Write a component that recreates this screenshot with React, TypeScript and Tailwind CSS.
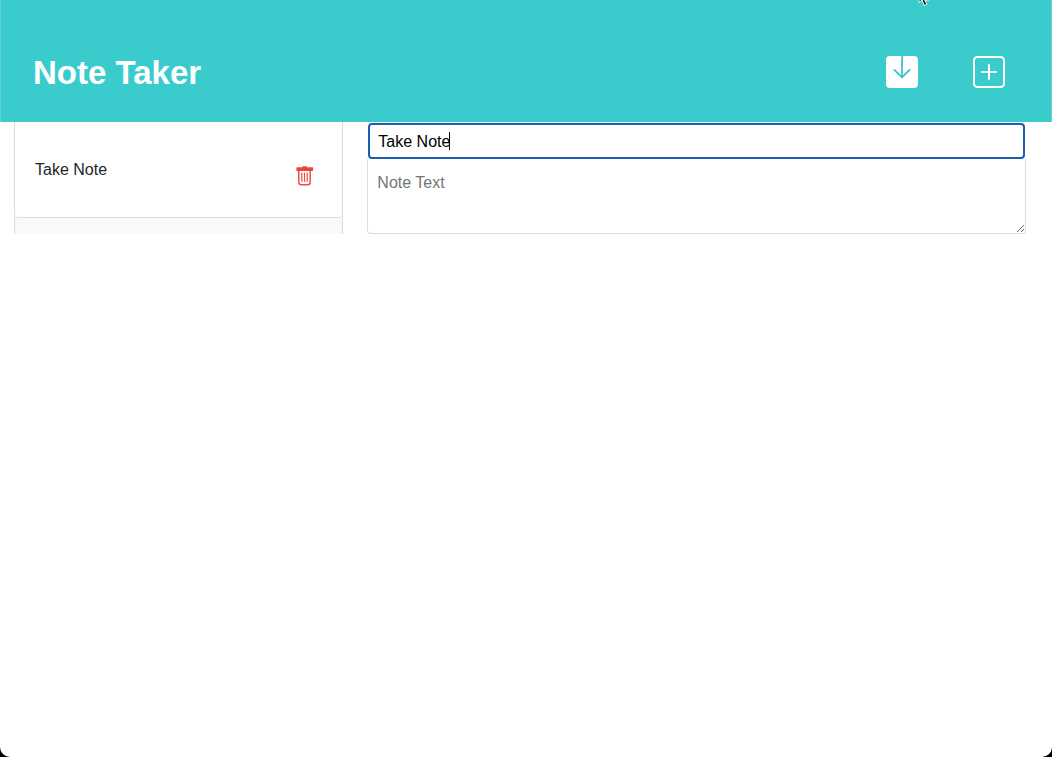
import { useState } from "react";

function SaveIcon() {
  return (
    <svg viewBox="0 0 32 32" className="block size-8" aria-hidden="true">
      <rect width="32" height="32" rx="4" fill="#fff" />
      <path d="M16.4 0L16 5v16M8.5 14l7.5 7.3 7.5-7.3" fill="none" stroke="#3cc6c9" strokeWidth="1.8" strokeLinecap="round" strokeLinejoin="round" />
    </svg>
  );
}

function AddIcon() {
  return (
    <svg viewBox="0 0 32 32" className="block size-8" fill="none" stroke="#fff" strokeWidth="2" aria-hidden="true">
      <rect x="1" y="1" width="30" height="30" rx="3.5" />
      <path d="M16 9v14M9 16h14" strokeLinecap="round" />
    </svg>
  );
}

function TrashIcon() {
  return (
    <svg viewBox="0 0 18 20" className="block h-5 w-[18px]" fill="none" stroke="#ea5048" aria-hidden="true">
      <path d="M.9 1.2h5.3Q6.3.2 7.3.2h2.9q1 0 1.1 1h5.3q.5 0 .5.6v2.4q0 .8-.7.8H1.1q-.7 0-.7-.8V1.8q0-.6.5-.6z" fill="#f04438" stroke="none" />
      <path d="M2.8 4v12.2q0 2.5 2.6 2.5h6.2q2.6 0 2.6-2.5V4" strokeWidth="1.5" />
      <path d="M5.8 7v8.5M8.5 7v8.5M11.2 7v8.5" strokeWidth="1.2" strokeLinecap="round" />
    </svg>
  );
}

function Pointer() {
  return (
    <svg viewBox="0 0 12 7" className="pointer-events-none absolute top-0 right-[122px] h-[7px] w-3" aria-hidden="true">
      <path d="M1 -9v11.5l3.1-2.5L6.2 5.5 8.8 4.3 6.7 0H11z" fill="#111" stroke="#fff" strokeWidth="1" />
    </svg>
  );
}

export default function App() {
  const [title, setTitle] = useState("Take Note");
  const [text, setText] = useState("");

  return (
    <div className="min-h-screen bg-black font-['Liberation_Sans',Arial,sans-serif] text-base text-[#212529]">
      <div className="relative min-h-screen overflow-hidden rounded-b-[10px] bg-white">
        <Pointer />
        <header className="flex h-[122px] items-center justify-between border-x border-[#61d6d7] bg-[#3acccd] pt-[22px] pr-[46px] pl-8">
          <h1 className="pt-0.5 text-[33px] leading-10 font-bold text-white">Note Taker</h1>
          <div className="flex gap-[55px]">
            <button type="button" aria-label="Save note">
              <SaveIcon />
            </button>
            <button type="button" aria-label="New note">
              <AddIcon />
            </button>
          </div>
        </header>
        <main className="grid grid-cols-[1fr_2fr] gap-x-6 pr-[26px] pl-3.5">
          <aside className="h-28 border-x border-[#d9dadc] bg-[#f8f9fa]">
            <ul>
              <li className="flex h-24 items-center justify-between rounded-b border-b border-[#dcddde] bg-white pr-7 pl-5">
                <span>{title}</span>
                <button type="button" aria-label="Delete note" className="pt-3">
                  <TrashIcon />
                </button>
              </li>
            </ul>
          </aside>
          <form className="flex h-28 flex-col pt-px">
            <div className="relative mx-px">
              <input
                aria-label="Note title"
                value={title}
                onChange={(event) => setTitle(event.target.value)}
                className="block h-9 w-full rounded-[4px] border-2 border-[#1a5fb4] bg-white px-2 pt-px text-black caret-transparent outline-none"
              />
              <span className="absolute top-[9px] left-[81px] h-[18px] w-px bg-black" aria-hidden="true" />
            </div>
            <textarea
              aria-label="Note text"
              placeholder="Note Text"
              value={text}
              onChange={(event) => setText(event.target.value)}
              className="block h-[75px] w-full resize rounded-b-[4px] border border-t-0 border-[#dcdddf] px-[9px] py-3 leading-6 text-black outline-none placeholder:text-[#757575]"
            />
          </form>
        </main>
      </div>
    </div>
  );
}
